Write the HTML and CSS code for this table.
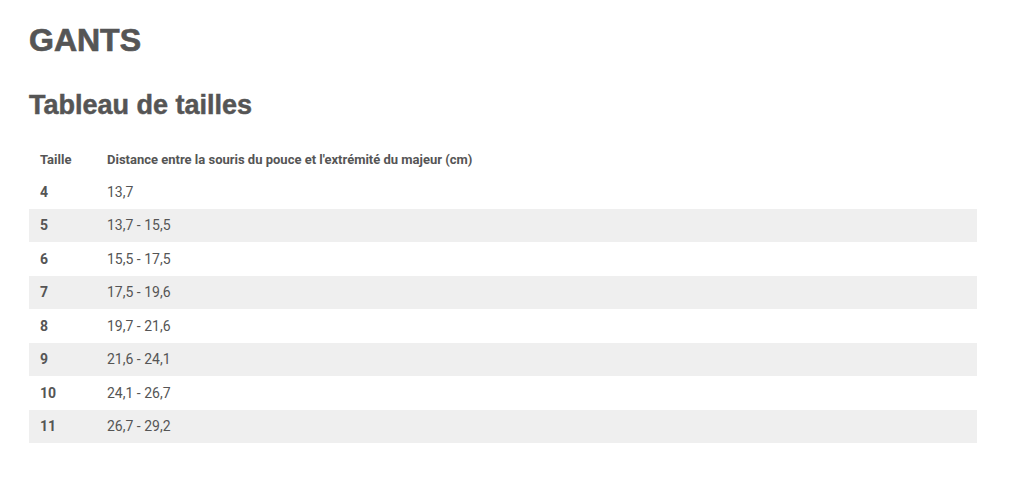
FILE: index.html
```html
<!DOCTYPE html>
<html lang="fr">
<head>
<meta charset="utf-8">
<link rel="stylesheet" href="styles.css">
</head>
<body>
<main class="page">
  <h1 class="title">GANTS</h1>
  <h2 class="subtitle">Tableau de tailles</h2>
  <table class="sizes">
    <thead>
      <tr><th class="c1">Taille</th><th>Distance entre la souris du pouce et l'extrémité du majeur (cm)</th></tr>
    </thead>
    <tbody>
      <tr><td class="c1">4</td><td>13,7</td></tr>
      <tr><td class="c1">5</td><td>13,7 - 15,5</td></tr>
      <tr><td class="c1">6</td><td>15,5 - 17,5</td></tr>
      <tr><td class="c1">7</td><td>17,5 - 19,6</td></tr>
      <tr><td class="c1">8</td><td>19,7 - 21,6</td></tr>
      <tr><td class="c1">9</td><td>21,6 - 24,1</td></tr>
      <tr><td class="c1">10</td><td>24,1 - 26,7</td></tr>
      <tr><td class="c1">11</td><td>26,7 - 29,2</td></tr>
    </tbody>
  </table>
</main>
</body>
</html>
```

FILE: styles.css
```css
html, body {
  margin: 0;
  padding: 0;
  background: #ffffff;
}
body {
  font-family: "Roboto", "Liberation Sans", sans-serif;
  color: #555555;
}
.page {
  padding: 20px 47px 0 29px;
}
.title {
  font-family: "Liberation Sans", Arial, sans-serif;
  font-weight: 700;
  font-size: 32px;
  line-height: 40px;
  margin: 0;
  color: #555555;
  -webkit-text-stroke: 0.7px #555555;
}
.subtitle {
  font-family: "Liberation Sans", Arial, sans-serif;
  font-weight: 700;
  font-size: 27px;
  line-height: 32px;
  margin: 29px 0 23px 0;
  color: #555555;
  -webkit-text-stroke: 0.5px #555555;
}
.sizes {
  width: 100%;
  border-collapse: collapse;
  font-size: 14px;
}
.sizes th {
  text-align: left;
  font-weight: 700;
  font-size: 13px;
  height: 31px;
  padding: 0 11px;
}
.sizes th.c1, .sizes td.c1 {
  width: 56px;
}
.sizes td {
  height: 33.5px;
  padding: 0 11px 0 0;
}
.sizes td.c1 {
  padding-left: 11px;
  font-weight: 700;
}
.sizes th:not(.c1) {
  padding-left: 0;
}
.sizes tbody tr:nth-child(even) {
  background: #efefef;
}
```
